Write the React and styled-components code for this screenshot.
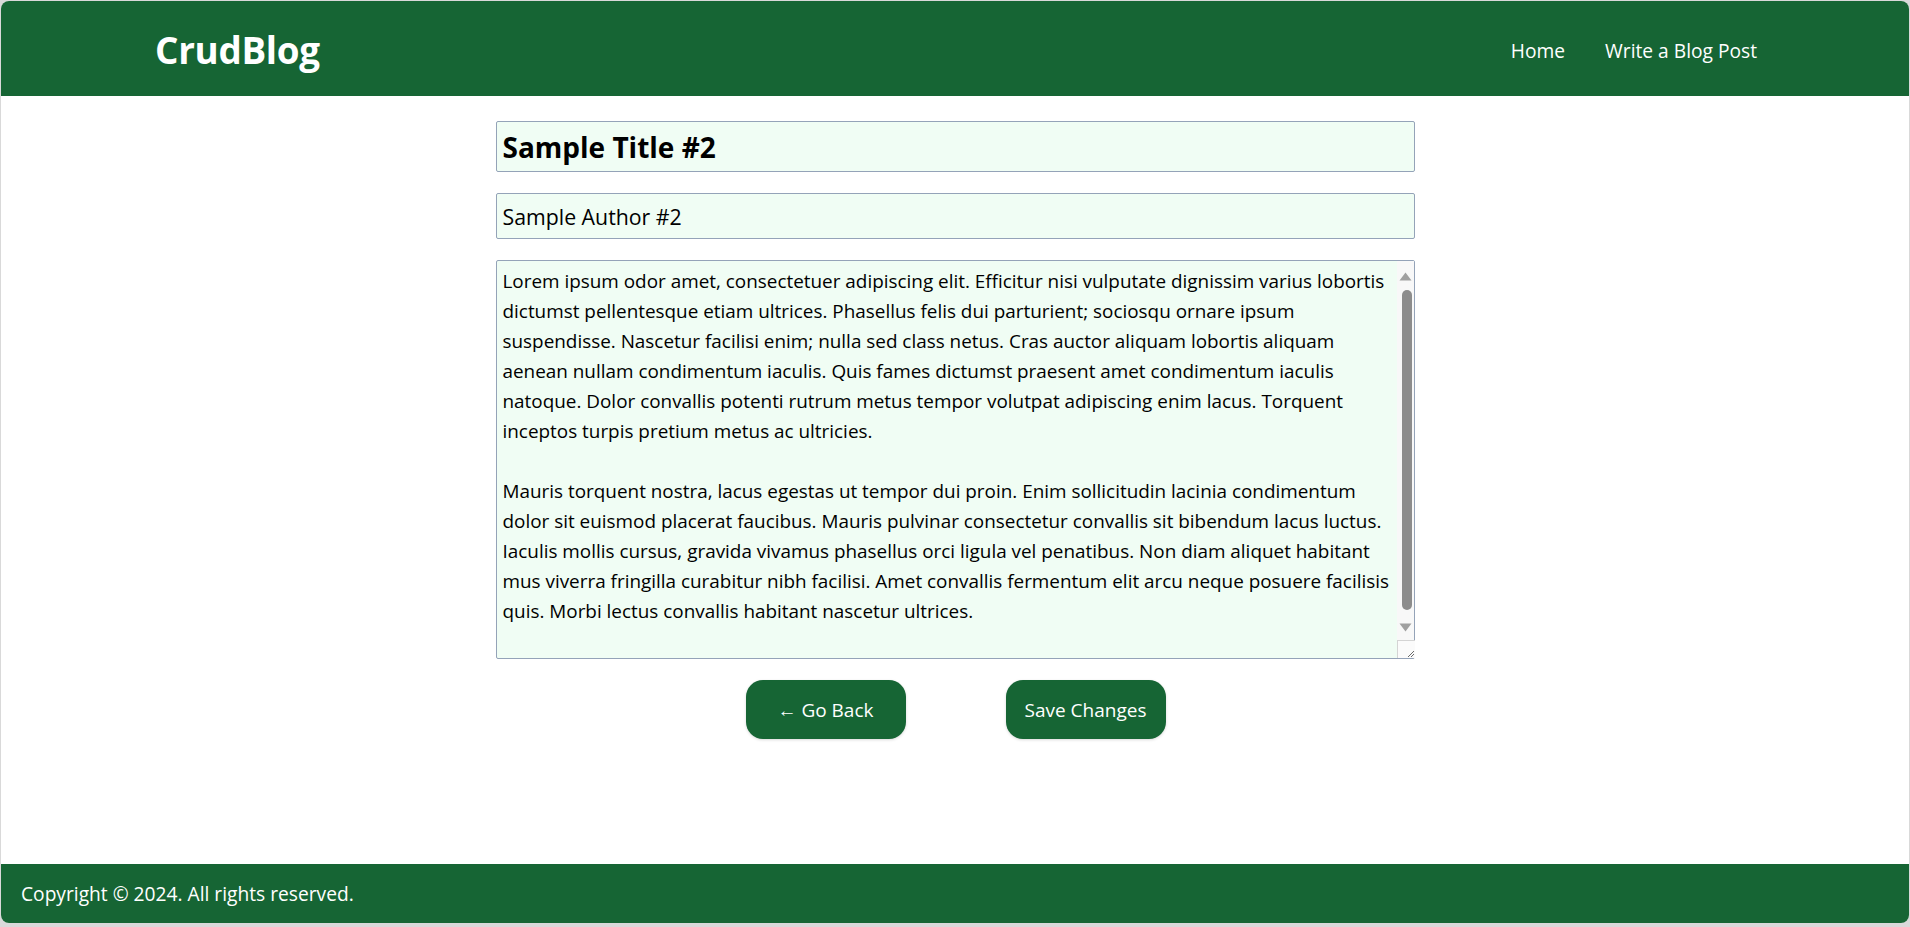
import React from "react";
import styled, { createGlobalStyle } from "styled-components";

const GREEN = "#166534";
const MINT = "#f0fdf4";
const FONT = `"Open Sans", "Noto Sans", sans-serif`;

const Global = createGlobalStyle`
  html, body { margin: 0; padding: 0; }
  body {
    background: #d9d9d9;
    font-family: ${FONT};
  }
  * { box-sizing: border-box; }
`;

const Frame = styled.div`
  margin: 1px 1px 0 1px;
  height: 922px;
  border-radius: 8px;
  overflow: hidden;
  background: #ffffff;
  display: flex;
  flex-direction: column;
`;

const Header = styled.header`
  height: 95px;
  flex: none;
  background: ${GREEN};
  display: flex;
  align-items: center;
  justify-content: space-between;
  padding: 0 152px 0 154px;
`;

const Logo = styled.a`
  color: #fff;
  font-size: 36.8px;
  font-weight: 700;
  text-decoration: none;
  letter-spacing: -0.3px;
  margin-top: 2px;
`;

const Nav = styled.nav`
  display: flex;
  gap: 40px;
  margin-top: 3px;
`;

const NavLink = styled.a`
  color: #fff;
  font-size: 19.2px;
  text-decoration: none;
`;

const Main = styled.main`
  flex: 1;
  display: flex;
  justify-content: center;
  padding-top: 25px;
`;

const Form = styled.form`
  width: 919px;
  display: flex;
  flex-direction: column;
  gap: 21px;
`;

const Field = styled.input`
  width: 100%;
  height: ${(p) => p.$h}px;
  background: ${MINT};
  border: 1px solid #94a3b8;
  border-radius: 2px;
  padding: 0 6px;
  font-family: ${FONT};
  font-size: ${(p) => p.$size}px;
  font-weight: ${(p) => (p.$bold ? 700 : 400)};
  color: #000;
  outline: none;
`;

const BodyWrap = styled.div`
  position: relative;
  height: 399px;
`;

const Body = styled.textarea`
  display: block;
  width: 100%;
  height: 100%;
  background: ${MINT};
  border: 1px solid #94a3b8;
  border-radius: 2px;
  padding: 5px 22px 17px 6px;
  font-family: ${FONT};
  font-size: 18.9px;
  line-height: 30px;
  color: #000;
  outline: none;
  overflow: hidden;
  resize: none;
`;

/* drawn scrollbar lying over the textarea's right edge */
const ScrollBar = styled.div`
  position: absolute;
  top: 1px;
  right: 1px;
  bottom: 1px;
  width: 17px;
  background: #f8f8f8;
  display: flex;
  flex-direction: column;
  align-items: center;
`;

const Arrow = styled.div`
  flex: none;
  height: ${(p) => p.$h}px;
  width: 100%;
  display: flex;
  align-items: ${(p) => (p.$down ? "flex-start" : "flex-end")};
  justify-content: center;
  color: #a0a0a0;
`;

const Thumb = styled.div`
  flex: none;
  width: 10px;
  height: 320px;
  border-radius: 5px;
  background: #8c8c8c;
  margin-top: 9px;
  margin-left: 3px;
`;

const Corner = styled.div`
  margin-top: auto;
  flex: none;
  width: 18px;
  height: 18px;
  margin-right: -1px;
  border-top: 1px solid #d4d4d4;
  border-left: 1px solid #d4d4d4;
  background: #fbfbfb;
  display: flex;
  align-items: flex-end;
  justify-content: flex-end;
`;

const Actions = styled.div`
  display: flex;
  justify-content: center;
  gap: 100px;
  padding-left: 1px;
`;

const Button = styled.button`
  width: 160px;
  height: 59px;
  border: none;
  border-radius: 17px;
  background: ${GREEN};
  color: #fff;
  font-family: ${FONT};
  font-size: 19px;
  cursor: pointer;
  box-shadow: 0 1px 3px rgba(0, 0, 0, 0.15);
`;

const Footer = styled.footer`
  height: 59px;
  flex: none;
  background: ${GREEN};
  color: #fff;
  display: flex;
  align-items: center;
  padding: 0 20px;
  font-size: 19.2px;
`;

const TEXT = [
  "Lorem ipsum odor amet, consectetuer adipiscing elit. Efficitur nisi vulputate dignissim varius lobortis",
  "dictumst pellentesque etiam ultrices. Phasellus felis dui parturient; sociosqu ornare ipsum",
  "suspendisse. Nascetur facilisi enim; nulla sed class netus. Cras auctor aliquam lobortis aliquam",
  "aenean nullam condimentum iaculis. Quis fames dictumst praesent amet condimentum iaculis",
  "natoque. Dolor convallis potenti rutrum metus tempor volutpat adipiscing enim lacus. Torquent",
  "inceptos turpis pretium metus ac ultricies.",
  "",
  "Mauris torquent nostra, lacus egestas ut tempor dui proin. Enim sollicitudin lacinia condimentum",
  "dolor sit euismod placerat faucibus. Mauris pulvinar consectetur convallis sit bibendum lacus luctus.",
  "Iaculis mollis cursus, gravida vivamus phasellus orci ligula vel penatibus. Non diam aliquet habitant",
  "mus viverra fringilla curabitur nibh facilisi. Amet convallis fermentum elit arcu neque posuere facilisis",
  "quis. Morbi lectus convallis habitant nascetur ultrices.",
].join("\n");

export default function App() {
  return (
    <>
      <Global />
      <Frame>
        <Header>
          <Logo href="#">CrudBlog</Logo>
          <Nav>
            <NavLink href="#">Home</NavLink>
            <NavLink href="#">Write a Blog Post</NavLink>
          </Nav>
        </Header>
        <Main>
          <Form onSubmit={(e) => e.preventDefault()}>
            <Field $h={51} $size={28} $bold defaultValue="Sample Title #2" />
            <Field $h={46} $size={21.3} defaultValue="Sample Author #2" />
            <BodyWrap>
              <Body wrap="off" defaultValue={TEXT} />
              <ScrollBar aria-hidden="true">
                <Arrow $h={20}>
                  <svg width="13" height="9" viewBox="0 0 13 9">
                    <path d="M6.5 0.5 L12.5 8.5 L0.5 8.5 Z" fill="currentColor" />
                  </svg>
                </Arrow>
                <Thumb />
                <Arrow $h={20} $down>
                  <svg width="13" height="9" viewBox="0 0 13 9" style={{ marginTop: 13 }}>
                    <path d="M0.5 0.5 L12.5 0.5 L6.5 8.5 Z" fill="currentColor" />
                  </svg>
                </Arrow>
                <Corner>
                  <svg width="10" height="10" viewBox="0 0 10 10">
                    <path d="M9 3 L3 9 M9 6 L6 9" stroke="#6b6b6b" strokeWidth="1" />
                  </svg>
                </Corner>
              </ScrollBar>
            </BodyWrap>
            <Actions>
              <Button type="button">← Go Back</Button>
              <Button type="submit">Save Changes</Button>
            </Actions>
          </Form>
        </Main>
        <Footer>Copyright © 2024. All rights reserved.</Footer>
      </Frame>
    </>
  );
}
